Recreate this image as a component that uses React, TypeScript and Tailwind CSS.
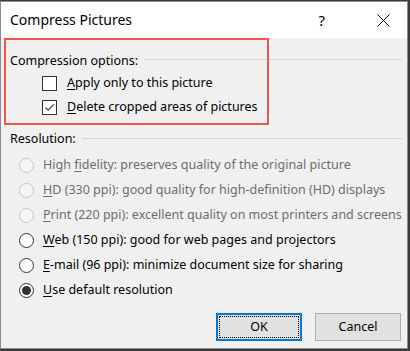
import React from "react";

const font = { fontFamily: '"Segoe UI", "Noto Sans", sans-serif' };

function U({ children }: { children: React.ReactNode }) {
  return <span className="underline underline-offset-[2px] decoration-[1px]">{children}</span>;
}

function Checkbox({ checked }: { checked?: boolean }) {
  return (
    <div className="w-[15px] h-[15px] border border-[#333333] bg-white flex items-center justify-center shrink-0">
      {checked && (
        <svg width="13" height="13" viewBox="0 0 13 13">
          <polyline points="2.5,6.5 5.2,9.2 10.8,3.3" fill="none" stroke="#444" strokeWidth="1.2" />
        </svg>
      )}
    </div>
  );
}

function Radio({ disabled, checked }: { disabled?: boolean; checked?: boolean }) {
  return (
    <div
      className={
        "w-[15px] h-[15px] rounded-full border flex items-center justify-center shrink-0 " +
        (disabled ? "border-[#c4c4c4] bg-[#f5f5f5]" : "border-[#333333] bg-white")
      }
    >
      {checked && <div className="w-[9px] h-[9px] rounded-full bg-[#333333]" />}
    </div>
  );
}

function RadioRow({ disabled, checked, children }: { disabled?: boolean; checked?: boolean; children: React.ReactNode }) {
  return (
    <div className="h-[25px] flex items-center pl-[18px] gap-[9px]">
      <Radio disabled={disabled} checked={checked} />
      <span className={disabled ? "text-[#6d6d6d]" : "text-black"}>{children}</span>
    </div>
  );
}

export default function App() {
  return (
    <div className="w-[410px] h-[351px] bg-[#3b3b3b] pt-[1px]" style={font}>
      <div className="w-[408px] h-[348px] border border-[#8c8c8c] bg-[#f0f0f0] flex flex-col relative text-[12.5px] leading-none text-black">
        <div className="h-[36px] bg-white flex items-center pl-[9px] shrink-0">
          <span className="text-[14px] text-black">Compress Pictures</span>
          <span className="ml-auto text-[15px] mr-[52px]">?</span>
          <svg width="13" height="13" viewBox="0 0 13 13" className="mr-[17px]">
            <path d="M0.5 0.5 L12.5 12.5 M12.5 0.5 L0.5 12.5" stroke="#111" strokeWidth="1" />
          </svg>
        </div>
        <div className="flex flex-col">
          <div className="h-[20px] mt-[13px] flex items-center pl-[9px] gap-[6px]">
            <span>Compression options:</span>
            <div className="flex-1 h-px bg-[#d6d6d6] mr-[5px] -mt-[4px]" />
          </div>
          <div className="h-[24px] flex items-center pl-[41px] gap-[10px]">
            <Checkbox />
            <span><U>A</U>pply only to this picture</span>
          </div>
          <div className="h-[24px] flex items-center pl-[41px] gap-[10px]">
            <Checkbox checked />
            <span><U>D</U>elete cropped areas of pictures</span>
          </div>
          <div className="h-[20px] mt-[10px] flex items-center pl-[9px] gap-[6px]">
            <span>Resolution:</span>
            <div className="flex-1 h-px bg-[#d6d6d6] mr-[5px] -mt-[2px]" />
          </div>
          <div className="mt-[4px] flex flex-col">
            <RadioRow disabled>High <U>f</U>idelity: preserves quality of the original picture</RadioRow>
            <RadioRow disabled><U>H</U>D (330 ppi): good quality for high-definition (HD) displays</RadioRow>
            <RadioRow disabled><U>P</U>rint (220 ppi): excellent quality on most printers and screens</RadioRow>
            <RadioRow><U>W</U>eb (150 ppi): good for web pages and projectors</RadioRow>
            <RadioRow><U>E</U>-mail (96 ppi): minimize document size for sharing</RadioRow>
            <RadioRow checked><U>U</U>se default resolution</RadioRow>
          </div>
          <div className="mt-[10px] flex justify-end gap-[13px] pr-[6px]">
            <button className="w-[86px] h-[28px] border-2 border-[#0078d7] bg-[#e1e1e1] p-[1px]">
              <div className="w-full h-full border border-dotted border-black flex items-center justify-center">OK</div>
            </button>
            <button className="w-[86px] h-[28px] border border-[#adadad] bg-[#e1e1e1] flex items-center justify-center">Cancel</button>
          </div>
        </div>
        <div className="absolute left-[3px] top-[36px] w-[265px] h-[87px] border-2 border-[#f0584f] pointer-events-none" />
      </div>
    </div>
  );
}
